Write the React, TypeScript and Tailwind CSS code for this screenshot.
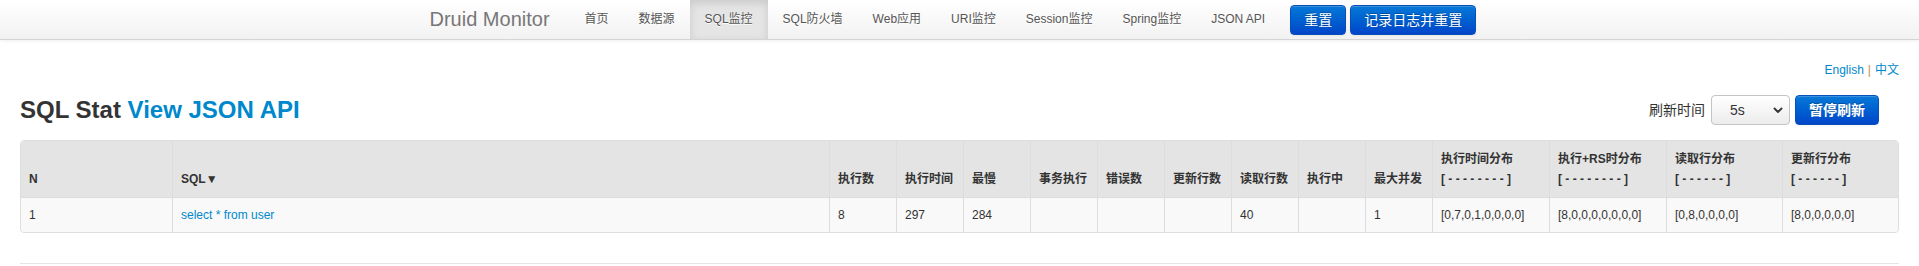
import React from "react";

const navItems = [
  { label: "首页" },
  { label: "数据源" },
  { label: "SQL监控", active: true },
  { label: "SQL防火墙" },
  { label: "Web应用" },
  { label: "URI监控" },
  { label: "Session监控" },
  { label: "Spring监控" },
  { label: "JSON API" },
];

// widths include the left border of each cell
const columns = [
  { title: "N", width: 151 },
  { title: "SQL▼", width: 657 },
  { title: "执行数", width: 67 },
  { title: "执行时间", width: 67 },
  { title: "最慢", width: 67 },
  { title: "事务执行", width: 67 },
  { title: "错误数", width: 67 },
  { title: "更新行数", width: 67 },
  { title: "读取行数", width: 67 },
  { title: "执行中", width: 67 },
  { title: "最大并发", width: 67 },
  { title: "执行时间分布", sub: "[ - - - - - - - - ]", width: 117 },
  { title: "执行+RS时分布", sub: "[ - - - - - - - - ]", width: 117 },
  { title: "读取行分布", sub: "[ - - - - - - ]", width: 116 },
  { title: "更新行分布", sub: "[ - - - - - - ]", width: 116 },
];

const row = [
  "1",
  "select * from user",
  "8",
  "297",
  "284",
  "",
  "",
  "",
  "40",
  "",
  "1",
  "[0,7,0,1,0,0,0,0]",
  "[8,0,0,0,0,0,0,0]",
  "[0,8,0,0,0,0]",
  "[8,0,0,0,0,0]",
];

const PrimaryButton = ({ children, bold = false, className = "" }: { children: React.ReactNode; bold?: boolean; className?: string }) => (
  <button
    className={`h-[30px] rounded-[4px] border border-[#0a4fb8] bg-gradient-to-b from-[#0a78d8] to-[#0346c9] px-[13px] text-[14px] leading-5 text-white [text-shadow:0_-1px_0_rgba(0,0,0,0.25)] shadow-[inset_0_1px_0_rgba(255,255,255,0.2),0_1px_2px_rgba(0,0,0,0.05)] ${
      bold ? "font-bold" : ""
    } ${className}`}
  >
    {children}
  </button>
);

export default function App() {
  return (
    <div className="bg-white font-['Liberation_Sans','Noto_Sans_CJK_SC',Arial,sans-serif] text-[12px] leading-5 text-[#333]">
      {/* navbar */}
      <header className="h-10 border-b border-[#d4d4d4] bg-gradient-to-b from-white to-[#f2f2f2] shadow-[0_1px_4px_rgba(0,0,0,0.065)]">
        <div className="mx-auto flex h-[39px] w-[1100px] items-center">
          <a className="px-5 text-[20px] leading-[39px] text-[#777]">Druid Monitor</a>
          <nav className="flex h-full">
            {navItems.map((item) => (
              <a
                key={item.label}
                className={`px-[15px] leading-[39px] text-[#555] [text-shadow:0_1px_0_#fff] ${
                  item.active ? "bg-[#e5e5e5] shadow-[inset_0_3px_8px_rgba(0,0,0,0.125)]" : ""
                }`}
              >
                {item.label}
              </a>
            ))}
          </nav>
          <div className="ml-[10px] flex gap-1">
            <PrimaryButton>重置</PrimaryButton>
            <PrimaryButton>记录日志并重置</PrimaryButton>
          </div>
        </div>
      </header>

      <main className="px-5">
        <div className="pt-5 text-right leading-5">
          <a className="text-[#0088cc]">English</a>
          <span className="mx-1 text-[#c0904a]">|</span>
          <a className="text-[#0088cc]">中文</a>
        </div>

        <div className="my-[10px] flex h-10 items-center justify-between">
          <h3 className="text-[24px] font-bold leading-10 text-[#333]">
            SQL Stat <a className="text-[#0088cc]">View JSON API</a>
          </h3>
          <div className="mr-5 flex items-center">
            <span className="mr-[6px] text-[14px] text-[#333]">刷新时间</span>
            <div className="flex h-[30px] w-[79px] items-center justify-between rounded-[4px] border border-[#c4c4c4] bg-gradient-to-b from-white to-[#ececec] pl-[18px] pr-[6px] text-[14px] text-[#333]">
              <span>5s</span>
              <svg width="10" height="10" viewBox="0 0 10 10" fill="none">
                <path d="M1.5 3.5 L5 7 L8.5 3.5" stroke="#333" strokeWidth="1.8" strokeLinecap="round" strokeLinejoin="round" />
              </svg>
            </div>
            <PrimaryButton bold className="ml-[5px]">
              暂停刷新
            </PrimaryButton>
          </div>
        </div>

        <table className="w-full table-fixed border-separate border-spacing-0 rounded-[4px] border border-[#ddd]">
          <colgroup>
            {columns.map((c) => (
              <col key={c.title} style={{ width: c.width }} />
            ))}
          </colgroup>
          <thead>
            <tr>
              {columns.map((c, i) => (
                <th
                  key={c.title}
                  className={`bg-[#e4e4e4] p-2 text-left align-bottom font-bold leading-5 text-[#333] ${
                    i > 0 ? "border-l border-[#ddd]" : ""
                  } ${i === 0 ? "rounded-tl-[4px]" : ""} ${i === columns.length - 1 ? "rounded-tr-[4px]" : ""}`}
                >
                  {c.title}
                  {c.sub && (
                    <>
                      <br />
                      {c.sub}
                    </>
                  )}
                </th>
              ))}
            </tr>
          </thead>
          <tbody>
            <tr>
              {row.map((v, i) => (
                <td
                  key={i}
                  className={`border-t border-[#ddd] bg-[#f9f9f9] px-2 py-[7px] align-top leading-5 ${i > 0 ? "border-l" : ""} ${
                    i === 0 ? "rounded-bl-[4px]" : ""
                  } ${i === row.length - 1 ? "rounded-br-[4px]" : ""}`}
                >
                  {i === 1 ? <a className="text-[#0088cc]">{v}</a> : v}
                </td>
              ))}
            </tr>
          </tbody>
        </table>

        <hr className="mt-[30px] border-t border-b border-t-[#e5e5e5] border-b-white" />
      </main>
    </div>
  );
}
